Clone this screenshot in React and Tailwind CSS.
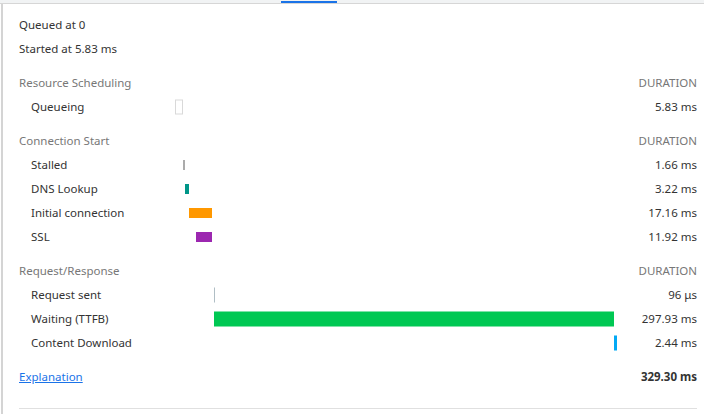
import React from 'react';

const sections = [
  {
    title: 'Resource Scheduling',
    rows: [
      { label: 'Queueing', value: '5.83 ms', left: 0, width: 8, h: 15, cls: 'border border-[#d9d9d9] bg-white' },
    ],
  },
  {
    title: 'Connection Start',
    rows: [
      { label: 'Stalled', value: '1.66 ms', left: 8, width: 2, h: 10, cls: 'bg-[#ababab]' },
      { label: 'DNS Lookup', value: '3.22 ms', left: 10, width: 4, h: 10, cls: 'bg-[#009688]' },
      { label: 'Initial connection', value: '17.16 ms', left: 14, width: 23, h: 10, cls: 'bg-[#ff9800]' },
      { label: 'SSL', value: '11.92 ms', left: 21, width: 16, h: 10, cls: 'bg-[#9c27b0]' },
    ],
  },
  {
    title: 'Request/Response',
    rows: [
      { label: 'Request sent', value: '96 μs', left: 39, width: 1, h: 15, cls: 'bg-[#b0bec5]' },
      { label: 'Waiting (TTFB)', value: '297.93 ms', left: 39, width: 400, h: 15, cls: 'bg-[#00c853]' },
      { label: 'Content Download', value: '2.44 ms', left: 439, width: 3, h: 15, cls: 'bg-[#03a9f4]' },
    ],
  },
];

const App = () => {
  return (
    <div className="h-[414px] w-[704px] overflow-hidden bg-white text-[11.5px] text-[#333] font-['Segoe_UI','Noto_Sans',sans-serif]">
      <div className="relative h-[4px] border-b border-[#d6d6d6] bg-[#f1f3f4]">
        <div className="absolute left-[281px] top-[1px] h-[2px] w-[56px] bg-[#1a73e8]"></div>
      </div>
      <div className="ml-px h-[410px] border-l-2 border-[#d4d4d4] pl-4 pr-[7px] pt-[9px]">
        <div className="flex h-6 items-center">Queued at 0</div>
        <div className="flex h-6 items-center">Started at 5.83 ms</div>

        {sections.map((s) => (
          <div key={s.title} className="mt-[10px]">
            <div className="flex h-6 items-center text-[#777]">
              <div className="flex-1">{s.title}</div>
              <div>DURATION</div>
            </div>
            {s.rows.map((r) => (
              <div key={r.label} className="flex h-6 items-center">
                <div className="w-[156px] pl-3">{r.label}</div>
                <div className="relative h-full w-[442px]">
                  <div
                    className={'absolute top-1/2 -translate-y-1/2 ' + r.cls}
                    style={{ left: r.left, width: r.width, height: r.h }}
                  ></div>
                </div>
                <div className="flex-1 text-right">{r.value}</div>
              </div>
            ))}
          </div>
        ))}

        <div className="mt-[10px] flex h-6 items-center">
          <a className="flex-1 text-[#1a73e8] underline">Explanation</a>
          <div className="font-bold">329.30 ms</div>
        </div>
        <div className="mt-[19px] border-t border-[#e0e0e0]"></div>
      </div>
    </div>
  );
};

export default App;
